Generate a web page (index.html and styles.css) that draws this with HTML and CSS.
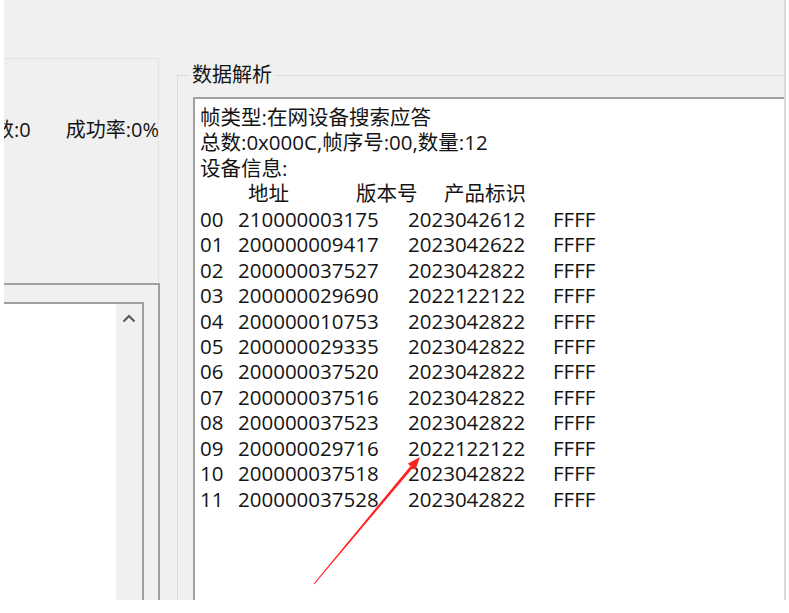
FILE: index.html
```html
<!DOCTYPE html>
<html lang="zh-CN">
<head>
<meta charset="utf-8">
<title>数据解析</title>
<link rel="stylesheet" href="styles.css">
</head>
<body>
<div class="window">
  <div class="left">
    <div class="top-gap"></div>
    <div class="stats">
      <span class="stat lost">数:0</span>
      <span class="stat rate">成功率:0%</span>
    </div>
    <div class="frame1">
      <div class="frame2">
        <div class="list"></div>
        <div class="vscroll">
          <svg class="chev" width="14" height="9" viewBox="0 0 14 9"><polyline points="1.5,7.5 7,2 12.5,7.5" fill="none" stroke="#5a5a5a" stroke-width="2.2"/></svg>
        </div>
      </div>
    </div>
  </div>
  <fieldset class="group">
    <legend class="group-title">数据解析</legend>
    <div class="textbox">
      <div class="line">帧类型:在网设备搜索应答</div>
      <div class="line">总数:0x000C,帧序号:00,数量:12</div>
      <div class="line">设备信息:</div>
      <div class="line head"><span></span><span>地址</span><span>版本号</span><span>产品标识</span></div>
      <div class="line row"><span>00</span><span>210000003175</span><span>2023042612</span><span>FFFF</span></div>
      <div class="line row"><span>01</span><span>200000009417</span><span>2023042622</span><span>FFFF</span></div>
      <div class="line row"><span>02</span><span>200000037527</span><span>2023042822</span><span>FFFF</span></div>
      <div class="line row"><span>03</span><span>200000029690</span><span>2022122122</span><span>FFFF</span></div>
      <div class="line row"><span>04</span><span>200000010753</span><span>2023042822</span><span>FFFF</span></div>
      <div class="line row"><span>05</span><span>200000029335</span><span>2023042822</span><span>FFFF</span></div>
      <div class="line row"><span>06</span><span>200000037520</span><span>2023042822</span><span>FFFF</span></div>
      <div class="line row"><span>07</span><span>200000037516</span><span>2023042822</span><span>FFFF</span></div>
      <div class="line row"><span>08</span><span>200000037523</span><span>2023042822</span><span>FFFF</span></div>
      <div class="line row"><span>09</span><span>200000029716</span><span>2022122122</span><span>FFFF</span></div>
      <div class="line row"><span>10</span><span>200000037518</span><span>2023042822</span><span>FFFF</span></div>
      <div class="line row"><span>11</span><span>200000037528</span><span>2023042822</span><span>FFFF</span></div>
    </div>
  </fieldset>
</div>
<svg class="arrow" width="789" height="613" viewBox="0 0 789 613">
  <polygon points="314.4,584.3 313.6,583.7 410.5,465.9 412.7,467.9" fill="#ff2222"/>
  <polygon points="420,457 415.4,470.1 407.8,463.7" fill="#ff2222"/>
</svg>
</body>
</html>
```
FILE: styles.css
```css
* { box-sizing: border-box; }
html, body { margin: 0; padding: 0; }
body {
  width: 789px;
  height: 613px;
  background: #ffffff;
  overflow: hidden;
  position: relative;
  font-family: "Open Sans", "Noto Sans CJK SC", sans-serif;
  color: #141414;
}
.window {
  margin-left: 4px;
  width: 782px;
  height: 600px;
  background: #f0f0f0;
  border-right: 2px solid #d9d9d9;
  display: flex;
}
.left {
  width: 156px;
  flex: none;
  display: flex;
  flex-direction: column;
}
.top-gap { height: 58px; flex: none; }
.stats {
  height: 225px;
  flex: none;
  margin-right: 1px;
  border-top: 1px solid #e2e2e2;
  border-right: 1px solid #e2e2e2;
  overflow: hidden;
  padding-top: 59px;
  display: flex;
  justify-content: space-between;
  align-items: flex-start;
  font-size: 20px;
  line-height: 24px;
  white-space: nowrap;
}
.lost { margin-left: -10px; }
.rate { margin-right: -1px; }
.frame1 {
  flex: 1;
  border-top: 2px solid #a0a0a0;
  border-right: 2px solid #a0a0a0;
  padding: 17px 14px 0 0;
  display: flex;
}
.frame2 {
  flex: 1;
  border-top: 2px solid #a0a0a0;
  border-right: 2px solid #a0a0a0;
  display: flex;
}
.list { flex: 1; background: #ffffff; }
.vscroll {
  width: 26px;
  flex: none;
  background: #f0f0f0;
  display: flex;
  justify-content: center;
  align-items: flex-start;
  padding-top: 10px;
}
.chev { display: block; }
.group {
  margin: 64px 0 0 17px;
  flex: 1;
  min-width: 0;
  border: 0;
  border-top: 1px solid #dcdcdc;
  border-left: 1px solid #dcdcdc;
  padding: 0 0 0 15px;
}
.group-title {
  font-size: 20px;
  line-height: 22px;
  padding: 0 2px;
  margin-left: -3px;
}
.textbox {
  margin-top: 11px;
  height: 503px;
  background: #ffffff;
  border-top: 2px solid #a0a0a0;
  border-left: 2px solid #a0a0a0;
  padding: 6px 0 0 5px;
  font-size: 20.5px;
  line-height: 25.45px;
  white-space: nowrap;
}
.line { height: 25.45px; }
.row {
  display: grid;
  grid-template-columns: 38px 170px 145px auto;
}
.head {
  display: grid;
  grid-template-columns: 48px 108px 88px auto;
}
.arrow {
  position: absolute;
  left: 0;
  top: 0;
  pointer-events: none;
}
```
